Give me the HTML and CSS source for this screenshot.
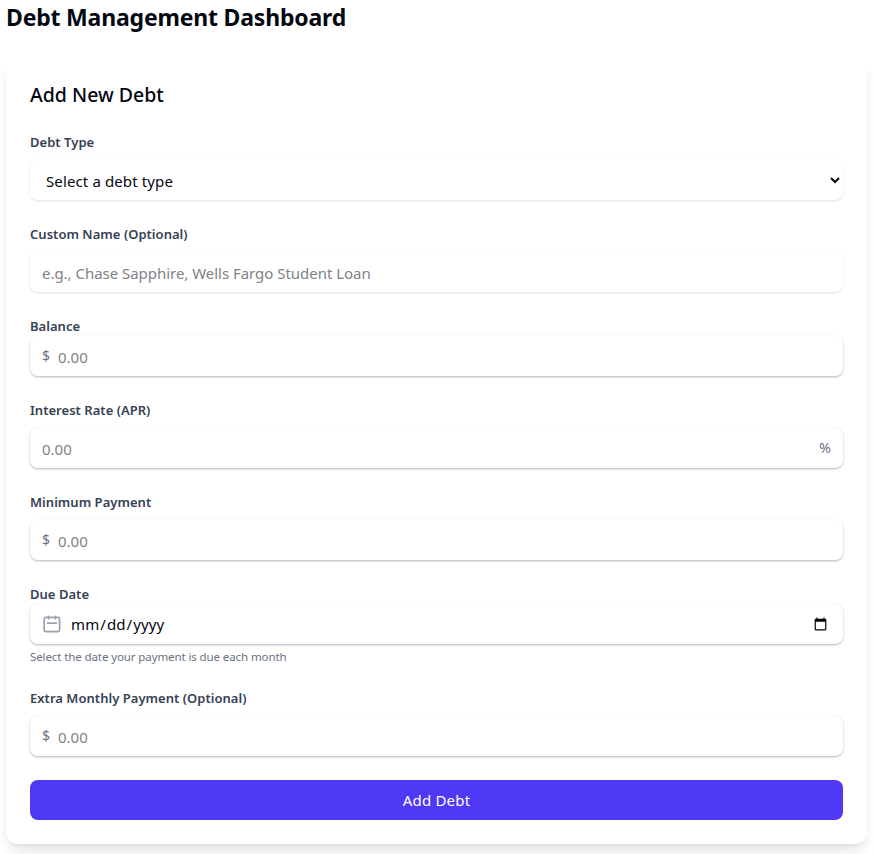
FILE: index.html
```html
<!DOCTYPE html>
<html lang="en">
<head>
<meta charset="utf-8">
<title>Debt Management Dashboard</title>
<link rel="stylesheet" href="styles.css">
</head>
<body>
<main class="page">
  <h1 class="page-title">Debt Management Dashboard</h1>
  <form class="card">
    <h2 class="card-title">Add New Debt</h2>
    <div class="field">
      <label class="label" for="type">Debt Type</label>
      <select class="control control-select" id="type"><option>Select a debt type</option></select>
    </div>
    <div class="field">
      <label class="label" for="name">Custom Name (Optional)</label>
      <input class="control control-soft" id="name" type="text" placeholder="e.g., Chase Sapphire, Wells Fargo Student Loan">
    </div>
    <div class="field field-tight">
      <label class="label" for="balance">Balance</label>
      <div class="control"><span class="affix">$</span><input class="bare" id="balance" type="text" placeholder="0.00"></div>
    </div>
    <div class="field">
      <label class="label" for="rate">Interest Rate (APR)</label>
      <div class="control"><input class="bare" id="rate" type="text" placeholder="0.00"><span class="affix">%</span></div>
    </div>
    <div class="field">
      <label class="label" for="minimum">Minimum Payment</label>
      <div class="control"><span class="affix">$</span><input class="bare" id="minimum" type="text" placeholder="0.00"></div>
    </div>
    <div class="field field-tight">
      <label class="label" for="due">Due Date</label>
      <div class="control control-date">
        <svg class="calendar" viewBox="0 0 20 20" width="20" height="20" fill="none" stroke="currentColor" stroke-width="1.7" stroke-linecap="round" stroke-linejoin="round"><rect x="2.2" y="3.4" width="15.4" height="14.2" rx="1.6"/><path d="M6.6 2.4v2.4M13.3 2.4v2.4M5.6 9.2h8.8"/></svg>
        <input class="bare date" id="due" type="date">
      </div>
      <p class="hint">Select the date your payment is due each month</p>
    </div>
    <div class="field">
      <label class="label" for="extra">Extra Monthly Payment (Optional)</label>
      <div class="control"><span class="affix">$</span><input class="bare" id="extra" type="text" placeholder="0.00"></div>
    </div>
    <button class="submit" type="button">Add Debt</button>
  </form>
</main>
</body>
</html>
```
FILE: styles.css
```css
* { box-sizing: border-box; }
body {
  margin: 0;
  background: #fff;
  color: #030712;
  font-family: "Noto Sans", sans-serif;
  font-size: 16px;
  line-height: 24px;
  overflow: hidden;
}
.page { padding: 0 8px 10px 6px; }
.page-title {
  margin: 0 0 24px;
  padding-top: 1px;
  height: 32px;
  font-size: 23px;
  line-height: 32px;
  font-weight: 700;
  letter-spacing: -.19px;
  white-space: nowrap;
}
.card {
  display: flex;
  flex-direction: column;
  gap: 24px;
  padding: 24px;
  border-radius: 12px;
  background: #fff;
  box-shadow: 0 10px 15px -3px rgb(0 0 0 / .1), 0 4px 6px -4px rgb(0 0 0 / .1);
}
.card-title {
  margin: 0;
  padding-top: 1px;
  height: 28px;
  font-size: 19.5px;
  line-height: 28px;
  font-weight: 500;
}
.field { display: flex; flex-direction: column; gap: 8px; }
.field-tight { gap: 0; }
.label {
  color: #364153;
  font-size: 13px;
  line-height: 20px;
  font-weight: 600;
  letter-spacing: .03px;
}
.control {
  display: flex;
  align-items: center;
  gap: 8px;
  width: 100%;
  height: 40px;
  padding: 0 12px;
  border: 0;
  border-radius: 8px;
  background: #fff;
  color: inherit;
  font: 15px/24px "Noto Sans", sans-serif;
  box-shadow: 0 1px 3px rgb(0 0 0 / .1), 0 1px 2px rgb(0 0 0 / .2);
}
.control-select, .control-soft { box-shadow: 0 1px 3px rgb(0 0 0 / .1), 0 1px 2px -1px rgb(0 0 0 / .1); }
.control-select { padding: 2px 0 0 12px; letter-spacing: .12px; }
.control-soft { padding-top: 2px; letter-spacing: -.03px; }
.control-date { padding-right: 13px; }
.bare {
  flex: 1;
  min-width: 0;
  height: 24px;
  padding: 2px 0 0;
  border: 0;
  background: transparent;
  color: inherit;
  font: 15px/22px "Noto Sans", sans-serif;
}
::placeholder { color: #808287; opacity: 1; }
.affix { color: #6a7282; font-size: 14px; line-height: 20px; }
.date { padding: 0; letter-spacing: .1px; }
.calendar { color: #99a1af; }
.hint {
  margin: 4px 0 0;
  padding-top: 1px;
  height: 16px;
  color: #6a7282;
  font-size: 11.5px;
  line-height: 16px;
  letter-spacing: -.1px;
}
.submit {
  height: 40px;
  padding: 0;
  border: 0;
  border-radius: 8px;
  background: #4f39f6;
  color: #fff;
  font: 15px/24px "Noto Sans", sans-serif;
  letter-spacing: .2px;
}
```
